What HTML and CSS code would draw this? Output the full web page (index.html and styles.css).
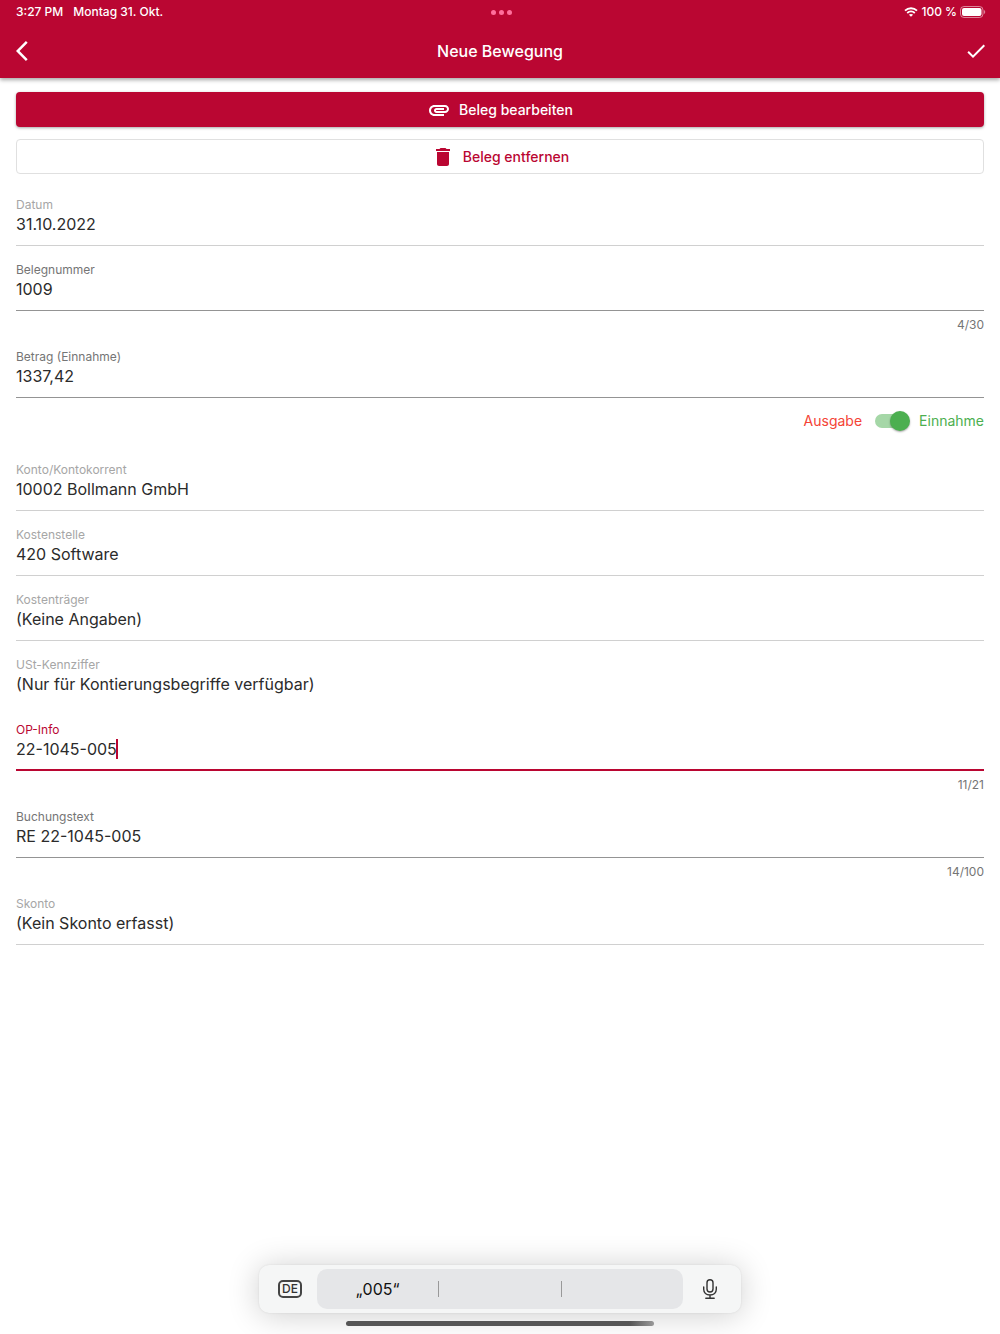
FILE: index.html
```html
<!DOCTYPE html>
<html lang="de">
  <head>
    <meta charset="utf-8">
    <meta name="viewport" content="width=device-width, initial-scale=1">
    <title>Neue Bewegung</title>
    <link rel="stylesheet" href="styles.css">
  </head>
  <body>
    <header class="header">
      <div class="status">
        <div class="status-left">
          <span>3:27 PM</span>
          <span>Montag 31. Okt.</span>
        </div>
        <div class="dots"><i></i><i></i><i></i></div>
        <div class="status-right">
          <svg width="14" height="10" viewBox="0 0 14 10" fill="none" stroke="#fff" stroke-width="1.8">
            <path d="M1 3.7C4.4.4 9.6.4 13 3.7"/>
            <path d="M3.2 6C5.4 4 8.6 4 10.8 6"/>
            <path d="M7 9.8L4.9 7.7C6.1 6.7 7.9 6.7 9.1 7.7z" fill="#fff" stroke="none"/>
          </svg>
          <span>100 %</span>
          <svg width="26" height="12" viewBox="0 0 26 12">
            <rect x=".5" y=".5" width="22.5" height="11" rx="3.5" fill="none" stroke="#fff" stroke-opacity=".5"/>
            <rect x="2" y="2" width="19.5" height="8" rx="2" fill="#fff"/>
            <path d="M24.2 4v4c1.3-.5 1.3-3.5 0-4z" fill="#fff" fill-opacity=".6"/>
          </svg>
        </div>
      </div>
      <div class="toolbar">
        <button class="icon-button" type="button" aria-label="Zurück">
          <svg width="24" height="24" viewBox="-4 0 24 24" fill="currentColor"><path d="M11.67 3.87L9.9 2.1 0 12l9.9 9.9 1.77-1.77L3.54 12z"/></svg>
        </button>
        <h1>Neue Bewegung</h1>
        <button class="icon-button" type="submit" form="movement" aria-label="Speichern">
          <svg width="24" height="24" viewBox="0 0 24 24" fill="currentColor"><path d="M9 16.17L4.83 12l-1.42 1.41L9 19 21 7l-1.41-1.41z"/></svg>
        </button>
      </div>
    </header>

    <main>
      <form id="movement">
        <div class="actions">
          <button class="button primary" type="button">
            <svg width="24" height="24" viewBox="0 0 24 24" fill="currentColor"><path d="M2 12.5C2 9.46 4.46 7 7.5 7H18c2.21 0 4 1.79 4 4s-1.79 4-4 4H9.5C8.12 15 7 13.88 7 12.5S8.12 10 9.5 10H17v2H9.41c-.55 0-.55 1 0 1H18c1.1 0 2-.9 2-2s-.9-2-2-2H7.5C5.57 9 4 10.57 4 12.5S5.57 16 7.5 16H17v2H7.5C4.46 18 2 15.54 2 12.5z"/></svg>
            Beleg bearbeiten
          </button>
          <button class="button outlined" type="button">
            <svg width="24" height="24" viewBox="0 0 24 24" fill="currentColor"><path d="M6 19c0 1.1.9 2 2 2h8c1.1 0 2-.9 2-2V7H6v12zM19 4h-3.5l-1-1h-5l-1 1H5v2h14V4z"/></svg>
            Beleg entfernen
          </button>
        </div>

        <div class="field readonly">
          <label for="date">Datum</label>
          <div class="control"><input id="date" type="text" value="31.10.2022" readonly></div>
        </div>
        <div class="field">
          <label for="number">Belegnummer</label>
          <div class="control"><input id="number" type="text" value="1009" maxlength="30"></div>
          <div class="counter">4/30</div>
        </div>
        <div class="field">
          <label for="amount">Betrag (Einnahme)</label>
          <div class="control"><input id="amount" type="text" inputmode="decimal" value="1337,42"></div>
        </div>
        <div class="kind">
          <span class="expense">Ausgabe</span>
          <input class="switch" id="income" type="checkbox" checked>
          <label class="income" for="income">Einnahme</label>
        </div>
        <div class="field readonly">
          <label for="account">Konto/Kontokorrent</label>
          <div class="control"><input id="account" type="text" value="10002 Bollmann GmbH" readonly></div>
        </div>
        <div class="field readonly">
          <label for="center">Kostenstelle</label>
          <div class="control"><input id="center" type="text" value="420 Software" readonly></div>
        </div>
        <div class="field readonly">
          <label for="unit">Kostenträger</label>
          <div class="control"><input id="unit" type="text" value="(Keine Angaben)" readonly></div>
        </div>
        <div class="field readonly plain">
          <label for="vat">USt-Kennziffer</label>
          <div class="control"><input id="vat" type="text" value="(Nur für Kontierungsbegriffe verfügbar)" readonly></div>
        </div>
        <div class="field active">
          <label for="info">OP-Info</label>
          <div class="control"><input id="info" type="text" value="22-1045-005" maxlength="21"><span class="caret"></span></div>
          <div class="counter">11/21</div>
        </div>
        <div class="field">
          <label for="text">Buchungstext</label>
          <div class="control"><input id="text" type="text" value="RE 22-1045-005" maxlength="100"></div>
          <div class="counter">14/100</div>
        </div>
        <div class="field readonly">
          <label for="discount">Skonto</label>
          <div class="control"><input id="discount" type="text" value="(Kein Skonto erfasst)" readonly></div>
        </div>
      </form>
    </main>

    <footer>
      <div class="keyboard">
        <button class="key" type="button" aria-label="Tastatur">
          <span class="lang">DE</span>
        </button>
        <div class="suggestions">
          <button type="button">„005“</button>
          <button type="button" aria-label="Vorschlag 2"></button>
          <button type="button" aria-label="Vorschlag 3"></button>
        </div>
        <button class="key" type="button" aria-label="Diktieren">
          <svg width="16" height="22" viewBox="0 0 16 22" fill="none" stroke="#333" stroke-width="1.4" stroke-linecap="round">
            <rect x="5" y="1.7" width="6" height="12.3" rx="3"/>
            <path d="M1.7 9v2.2c0 3.4 2.6 5.8 6.3 5.8s6.3-2.4 6.3-5.8V9M8 17v3.3M3.8 20.3h8.4"/>
          </svg>
        </button>
      </div>
      <div class="home"></div>
    </footer>
  </body>
</html>
```

FILE: styles.css
```css
* {
  box-sizing: border-box;
}
body {
  margin: 0;
  min-height: 100vh;
  display: flex;
  flex-direction: column;
  background: #fff;
  color: #2b2b2b;
  font-family: Inter, "Liberation Sans", sans-serif;
  overflow-x: hidden;
}
button, input {
  font: inherit;
  color: inherit;
  margin: 0;
  padding: 0;
  border: none;
  background: none;
}
svg {
  display: block;
  flex: none;
}

/* HEADER ====================================== */
.header {
  background: #ba0632;
  color: #fff;
  box-shadow: 0 2px 4px rgba(0,0,0,0.35);
}
.status {
  display: grid;
  grid-template-columns: 1fr auto 1fr;
  align-items: center;
  height: 24px;
  padding: 0 14px 0 16px;
  font-size: 12px;
  font-weight: 500;
  line-height: 16px;
}
.status-left, .status-right {
  display: flex;
  align-items: center;
}
.status-left {
  gap: 10px;
}
.status-right {
  justify-content: flex-end;
  gap: 3px;
}
.dots {
  display: flex;
  gap: 3px;
}
.dots i {
  width: 5px;
  height: 5px;
  border-radius: 50%;
  background: #ff6f9c;
}
.toolbar {
  display: flex;
  align-items: center;
  justify-content: space-between;
  height: 54px;
  padding: 0 12px;
}
h1 {
  margin: 0;
  font-size: 16px;
  font-weight: 500;
}

/* BUTTONS ===================================== */
form {
  padding: 14px 16px 0;
}
.actions {
  display: grid;
  gap: 12px;
  margin-bottom: 7px;
}
.button {
  display: flex;
  align-items: center;
  justify-content: center;
  gap: 8px;
  height: 35px;
  border-radius: 4px;
  font-size: 14px;
  font-weight: 500;
  line-height: 18px;
}
.primary {
  background: #ba0632;
  color: #fff;
  box-shadow: 0 1px 3px rgba(0,0,0,0.35);
}
.outlined {
  border: 1px solid #e0e0e0;
  color: #ba0632;
}

/* FIELDS ====================================== */
.field {
  padding-top: 16px;
}
.field label {
  display: block;
  font-size: 12px;
  line-height: 16px;
  color: #757575;
}
.control {
  display: flex;
  align-items: center;
  padding-bottom: 10px;
  border-bottom: 1px solid #949494;
}
.control input {
  flex: 1;
  min-width: 0;
  height: 22px;
  font-size: 16px;
  line-height: 22px;
  outline: none;
}
.counter {
  height: 22px;
  padding-top: 6px;
  font-size: 12px;
  line-height: 16px;
  text-align: right;
  color: #757575;
}
.readonly label {
  color: #a6a6a6;
}
.readonly .control {
  border-color: #d0d0d0;
}
.plain .control {
  border-color: transparent;
}
.active label {
  color: #ba0632;
}
.active .control {
  padding-bottom: 9px;
  border-bottom: 2px solid #ba0632;
}
.active input {
  flex: none;
  field-sizing: content;
}
.caret {
  width: 2px;
  height: 20px;
  margin-left: -1px;
  background: #ba0632;
}

/* SWITCH ====================================== */
.kind {
  display: flex;
  align-items: center;
  justify-content: flex-end;
  height: 46px;
  margin-bottom: 2px;
  font-size: 14px;
  line-height: 18px;
}
.expense {
  color: #f44336;
}
.income {
  color: #4caf50;
}
.switch {
  appearance: none;
  position: relative;
  width: 35px;
  height: 20px;
  margin: 0 9px 0 13px;
}
.switch:before, .switch:after {
  content: '';
  position: absolute;
}
.switch:before {
  left: 0;
  top: 3px;
  width: 32px;
  height: 14px;
  border-radius: 7px;
  background: #a5d7a7;
}
.switch:after {
  left: 0;
  top: 0;
  width: 20px;
  height: 20px;
  border-radius: 50%;
  background: #4caf50;
  box-shadow: 0 1px 2px rgba(0,0,0,0.35);
}
.switch:checked:after {
  left: auto;
  right: 0;
}

/* KEYBOARD BAR ================================ */
footer {
  display: flex;
  flex-direction: column;
  align-items: center;
  gap: 8px;
  margin-top: auto;
  padding: 24px 16px 8px;
}
.keyboard {
  display: flex;
  width: 100%;
  max-width: 482px;
  height: 48px;
  padding: 4px 0;
  border-radius: 10px;
  background: #f5f6f6;
  box-shadow: 0 0 2px rgba(0,0,0,0.1), 0 2px 32px rgba(0,0,0,0.2);
}
.key {
  display: flex;
  align-items: center;
  justify-content: center;
  width: 58px;
  padding-left: 4px;
}
.key + .suggestions + .key {
  padding: 0 4px 0 0;
}
.lang {
  padding: 0 2px;
  border: 2px solid #444;
  border-radius: 5px;
  font-size: 12px;
  font-weight: 500;
  line-height: 14px;
  color: #333;
}
.suggestions {
  flex: 1;
  display: flex;
  align-items: center;
  border-radius: 10px;
  background: #e5e6e8;
}
.suggestions button {
  flex: 1;
  height: 16px;
  font-size: 16px;
  line-height: 16px;
  color: #111;
}
.suggestions button + button {
  border-left: 1px solid #999;
}
.home {
  width: 100%;
  max-width: 308px;
  height: 5px;
  border-radius: 3px;
  background: linear-gradient(90deg, #555 92%, #999);
}
```
